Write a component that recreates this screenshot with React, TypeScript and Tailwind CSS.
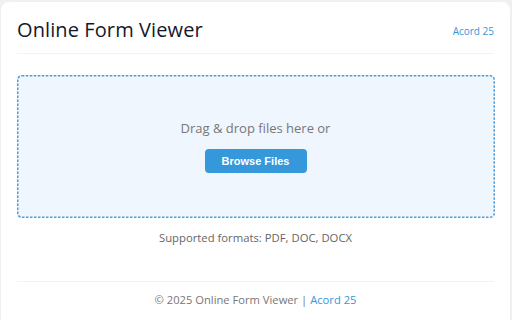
export default function App() {
  const font = { fontFamily: '"Open Sans", "Noto Sans", sans-serif' };
  return (
    <div className="w-[512px] h-[320px] bg-[#f0f0f0] pt-[2px] pl-[1px] pr-[2px] overflow-hidden" style={font}>
      <div className="bg-white rounded-[8px] h-[330px] px-[16px]">
        <header className="flex items-center justify-between h-[52px] pt-[4px] border-b border-[#f3f3f3]">
          <h1 className="text-[20px] leading-none font-medium text-[#16182a] tracking-[0.1px]">Online Form Viewer</h1>
          <a className="text-[10px] text-[#3498db] mt-[3px]">Acord 25</a>
        </header>
        <div className="relative mt-[21px] h-[143px] rounded-[4px] bg-[#eff6fe] flex flex-col items-center pt-[43px]">
          <svg className="absolute inset-0 pointer-events-none" width="478" height="143">
            <rect x="0.75" y="0.75" width="476.5" height="141.5" rx="4" fill="none" stroke="#4a9fe0" strokeWidth="1.5" strokeDasharray="2.5 1.5" />
          </svg>
          <p className="text-[13px] leading-[20px] text-[#777]">Drag &amp; drop files here or</p>
          <button
            className="mt-[11px] w-[102px] h-[24px] rounded-[4px] bg-[#3498db] text-white text-[11px] font-bold"
            style={{ fontFamily: '"Liberation Sans", Arial, sans-serif' }}
          >
            Browse Files
          </button>
        </div>
        <p className="text-center text-[11.3px] leading-[16px] text-[#666] mt-[12px]">Supported formats: PDF, DOC, DOCX</p>
        <footer className="mt-[35px] border-t border-[#f3f3f3] pt-[9px] text-center text-[11.2px] leading-[18px] text-[#777]">
          © 2025 Online Form Viewer | <span className="text-[#3498db]">Acord 25</span>
        </footer>
      </div>
    </div>
  );
}
